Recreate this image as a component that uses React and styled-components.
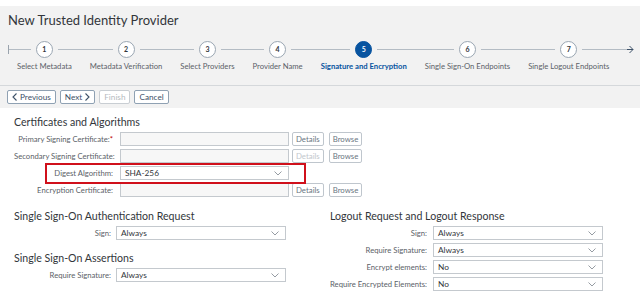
import React from "react";
import styled, { createGlobalStyle } from "styled-components";

const Global = createGlobalStyle`
  html, body { margin: 0; padding: 0; background: #ffffff; }
  body { font-family: Lato, "Open Sans", Arial, sans-serif; color: #32363a; }
  * { box-sizing: border-box; }
`;

const Page = styled.div`
  width: 640px;
  height: 303px;
  overflow: hidden;
  background: #fff;
  padding-top: 6px;
`;

const Header = styled.div`
  background: #f2f2f2;
`;

const Title = styled.h1`
  margin: 0;
  padding: 5px 8px 0;
  font-size: 13px;
  line-height: 19px;
  font-weight: 400;
  color: #32363a;
`;

const Wizard = styled.div`
  display: flex;
  align-items: flex-start;
  padding: 10px 0 13px 8px;
  border-bottom: 1px solid #d5d8db;
`;

const Step = styled.div`
  display: flex;
  flex-direction: column;
  align-items: center;
  padding: 0 9px;
`;

const Track = styled.div`
  display: flex;
  align-items: center;
  align-self: stretch;
  height: 18px;
  margin: 0 -9px;
`;

const Seg = styled.span`
  flex: 1;
  height: 1px;
  background: #b4bcc4;
  position: relative;
  &::before {
    content: "";
    display: ${(p) => (p.$tick ? "block" : "none")};
    position: absolute;
    left: 0;
    top: -4px;
    width: 1px;
    height: 9px;
    background: #9aa3ad;
  }
`;

const Circle = styled.span`
  width: 17px;
  height: 17px;
  margin: 0 5px;
  border-radius: 50%;
  border: 1px solid ${(p) => (p.$active ? "#0854a0" : "#9aa6b2")};
  background: ${(p) => (p.$active ? "#0854a0" : "#ffffff")};
  color: ${(p) => (p.$active ? "#ffffff" : "#32363a")};
  font-size: 7px;
  font-weight: 700;
  display: flex;
  align-items: center;
  justify-content: center;
  flex: none;
`;

const StepLabel = styled.span`
  margin-top: 3px;
  font-size: 7.7px;
  line-height: 11px;
  white-space: nowrap;
  color: ${(p) => (p.$active ? "#0854a0" : "#5b6168")};
  font-weight: ${(p) => (p.$active ? 700 : 400)};
`;

const EndArrow = styled.div`
  display: flex;
  align-items: center;
  height: 18px;
  width: 16px;
`;

const Toolbar = styled.div`
  display: flex;
  gap: 4px;
  padding: 4px 7px 4px;
`;

const Btn = styled.button`
  height: 14px;
  padding: 0 4px;
  display: inline-flex;
  align-items: center;
  gap: 3px;
  font-family: inherit;
  font-size: 8.2px;
  background: #ffffff;
  border: 1px solid ${(p) => (p.disabled ? "#c9ced3" : "#8fa1b3")};
  color: ${(p) => (p.disabled ? "#b5bac0" : "#3d5168")};
  border-radius: 2px;
  cursor: pointer;
`;

const Content = styled.div`
  padding: 0 14px;
`;

const SectionTitle = styled.h2`
  margin: 0;
  font-size: 10.6px;
  line-height: 13px;
  font-weight: 400;
  color: #32363a;
  white-space: nowrap;
`;

const Section = styled.section`
  margin-top: ${(p) => p.$top || 0}px;
`;

const Form = styled.div`
  display: grid;
  grid-template-columns: ${(p) => p.$cols};
  column-gap: ${(p) => p.$gap || 6}px;
  row-gap: 3px;
  margin-top: 3px;
  align-items: center;
  position: relative;
`;

const Label = styled.span`
  text-align: right;
  font-size: 7.7px;
  color: #5b6168;
  white-space: nowrap;
  padding-right: ${(p) => p.$pad || 0}px;
`;

const Req = styled.span`
  color: #bb0000;
`;

const Field = styled.div`
  height: 14px;
  border: 1px solid #c4c9ce;
  background: ${(p) => (p.$select ? "#ffffff" : "#f7f7f7")};
  display: flex;
  align-items: center;
  justify-content: space-between;
  padding: 0 6px 0 4px;
  font-size: 8.3px;
  color: #32363a;
`;

const BtnPair = styled.div`
  display: flex;
  gap: 5px;
`;

const SmallBtn = styled.button`
  height: 14px;
  padding: 0 3px;
  font-family: inherit;
  font-size: 7.8px;
  background: #fff;
  border: 1px solid #bfc6cd;
  border-radius: 2px;
  color: ${(p) => (p.disabled ? "#c2c7cc" : "#6a7682")};
`;

const Highlight = styled.div`
  position: absolute;
  left: 31px;
  top: 31px;
  width: 261px;
  height: 21px;
  border: 2px solid #d0101b;
  pointer-events: none;
`;

const Columns = styled.div`
  display: grid;
  grid-template-columns: 316px 1fr;
  margin-top: 13px;
`;

const Chevron = () => (
  <svg width="8" height="5" viewBox="0 0 8 5">
    <polyline points="0.5,0.5 4,4 7.5,0.5" fill="none" stroke="#8a9199" strokeWidth="0.9" />
  </svg>
);

const Select = ({ value }) => (
  <Field $select>
    <span>{value}</span>
    <Chevron />
  </Field>
);

const steps = [
  "Select Metadata",
  "Metadata Verification",
  "Select Providers",
  "Provider Name",
  "Signature and Encryption",
  "Single Sign-On Endpoints",
  "Single Logout Endpoints",
];

export default function App() {
  return (
    <Page>
      <Global />
      <Header>
        <Title>New Trusted Identity Provider</Title>
        <Wizard>
          {steps.map((s, i) => (
            <Step key={s}>
              <Track>
                <Seg $tick={i === 0} />
                <Circle $active={i === 4}>{i + 1}</Circle>
                <Seg />
              </Track>
              <StepLabel $active={i === 4}>{s}</StepLabel>
            </Step>
          ))}
          <EndArrow>
            <svg width="16" height="9" viewBox="0 0 16 9">
              <line x1="0" y1="4.5" x2="9" y2="4.5" stroke="#b4bcc4" strokeWidth="1" />
              <line x1="9" y1="4.5" x2="15" y2="4.5" stroke="#3d5168" strokeWidth="1" />
              <polyline points="11.5,1 15,4.5 11.5,8" fill="none" stroke="#3d5168" strokeWidth="1" />
            </svg>
          </EndArrow>
        </Wizard>
        <Toolbar>
          <Btn>
            <svg width="5" height="8" viewBox="0 0 5 8">
              <polyline points="4.5,0.5 1,4 4.5,7.5" fill="none" stroke="#3d5168" strokeWidth="1.1" />
            </svg>
            Previous
          </Btn>
          <Btn>
            Next
            <svg width="5" height="8" viewBox="0 0 5 8">
              <polyline points="0.5,0.5 4,4 0.5,7.5" fill="none" stroke="#3d5168" strokeWidth="1.1" />
            </svg>
          </Btn>
          <Btn disabled>Finish</Btn>
          <Btn>Cancel</Btn>
        </Toolbar>
      </Header>
      <Content>
        <Section $top={8}>
          <SectionTitle>Certificates and Algorithms</SectionTitle>
          <Form $cols="103px 169px auto" $gap={3}>
            <Label $pad={4}>
              Primary Signing Certificate:<Req>*</Req>
            </Label>
            <Field />
            <BtnPair>
              <SmallBtn>Details</SmallBtn>
              <SmallBtn>Browse</SmallBtn>
            </BtnPair>
            <Label $pad={4}>Secondary Signing Certificate:</Label>
            <Field />
            <BtnPair>
              <SmallBtn disabled>Details</SmallBtn>
              <SmallBtn>Browse</SmallBtn>
            </BtnPair>
            <Label $pad={4}>Digest Algorithm:</Label>
            <Select value="SHA-256" />
            <span />
            <Label $pad={4}>Encryption Certificate:</Label>
            <Field />
            <BtnPair>
              <SmallBtn>Details</SmallBtn>
              <SmallBtn>Browse</SmallBtn>
            </BtnPair>
            <Highlight />
          </Form>
        </Section>
        <Columns>
          <div>
            <Section>
              <SectionTitle>Single Sign-On Authentication Request</SectionTitle>
              <Form $cols="97px 170px" $gap={5}>
                <Label>Sign:</Label>
                <Select value="Always" />
              </Form>
            </Section>
            <Section $top={12}>
              <SectionTitle>Single Sign-On Assertions</SectionTitle>
              <Form $cols="97px 170px" $gap={5}>
                <Label>Require Signature:</Label>
                <Select value="Always" />
              </Form>
            </Section>
          </div>
          <Section>
            <SectionTitle>Logout Request and Logout Response</SectionTitle>
            <Form $cols="97px 170px" $gap={6}>
              <Label>Sign:</Label>
              <Select value="Always" />
              <Label>Require Signature:</Label>
              <Select value="Always" />
              <Label>Encrypt elements:</Label>
              <Select value="No" />
              <Label>Require Encrypted Elements:</Label>
              <Select value="No" />
            </Form>
          </Section>
        </Columns>
      </Content>
    </Page>
  );
}
